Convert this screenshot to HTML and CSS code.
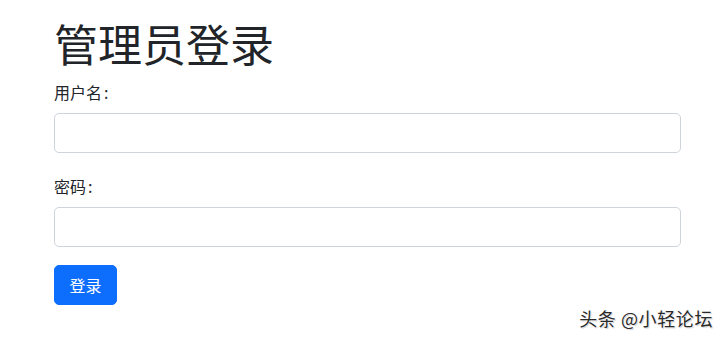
FILE: index.html
```html
<!DOCTYPE html>
<html lang="zh-CN">
<head>
<meta charset="utf-8">
<title>管理员登录</title>
<link rel="stylesheet" href="styles.css">
</head>
<body>
<div class="page">
  <h1 class="title">管理员登录</h1>
  <form class="login">
    <div class="field">
      <label class="label" for="u">用户名<span class="colon">:</span></label>
      <input class="control" id="u" type="text">
    </div>
    <div class="field">
      <label class="label" for="p">密码<span class="colon">:</span></label>
      <input class="control" id="p" type="password">
    </div>
    <button class="btn" type="button">登录</button>
  </form>
</div>
<div class="watermark">头条 @小轻论坛</div>
</body>
</html>
```
FILE: styles.css
```css
html, body {
  margin: 0;
  padding: 0;
  background: #fff;
}
body {
  font-family: "Noto Sans CJK SC", "Liberation Sans", sans-serif;
  color: #212529;
  font-size: 16px;
  line-height: 24px;
  width: 723px;
  height: 338px;
  overflow: hidden;
  position: relative;
}
.page {
  padding: 17px 0 0 54px;
  width: 627px;
}
.title {
  margin: 0 0 10px 0;
  font-size: 44px;
  line-height: 53px;
  font-weight: 400;
  letter-spacing: 0;
}
.login {
  display: flex;
  flex-direction: column;
}
.field {
  display: flex;
  flex-direction: column;
  margin-bottom: 18px;
}
.field:first-child {
  margin-bottom: 21px;
}
.label {
  display: block;
  margin-bottom: 9px;
  height: 24px;
}
.colon {
  margin-left: 2px;
}
.control {
  box-sizing: border-box;
  width: 627px;
  height: 40px;
  margin: 0;
  border: 1px solid #ced4da;
  border-radius: 5px;
  background: #fff;
  padding: 6px 12px;
  font: inherit;
}
.btn {
  align-self: flex-start;
  box-sizing: border-box;
  width: 63px;
  height: 40px;
  padding: 0;
  border: 1px solid #0d6efd;
  border-radius: 5px;
  background: #0d6efd;
  color: #fff;
  font-family: inherit;
  font-size: 16px;
  line-height: 24px;
}
.watermark {
  position: absolute;
  right: 10px;
  top: 306px;
  font-size: 18px;
  letter-spacing: 0.6px;
  line-height: 24px;
  color: #2a2a2a;
  text-shadow: 0 0 2px #fff, 0 0 2px #fff, 1px 1px 1px rgba(0,0,0,0.25);
  white-space: nowrap;
}
```
